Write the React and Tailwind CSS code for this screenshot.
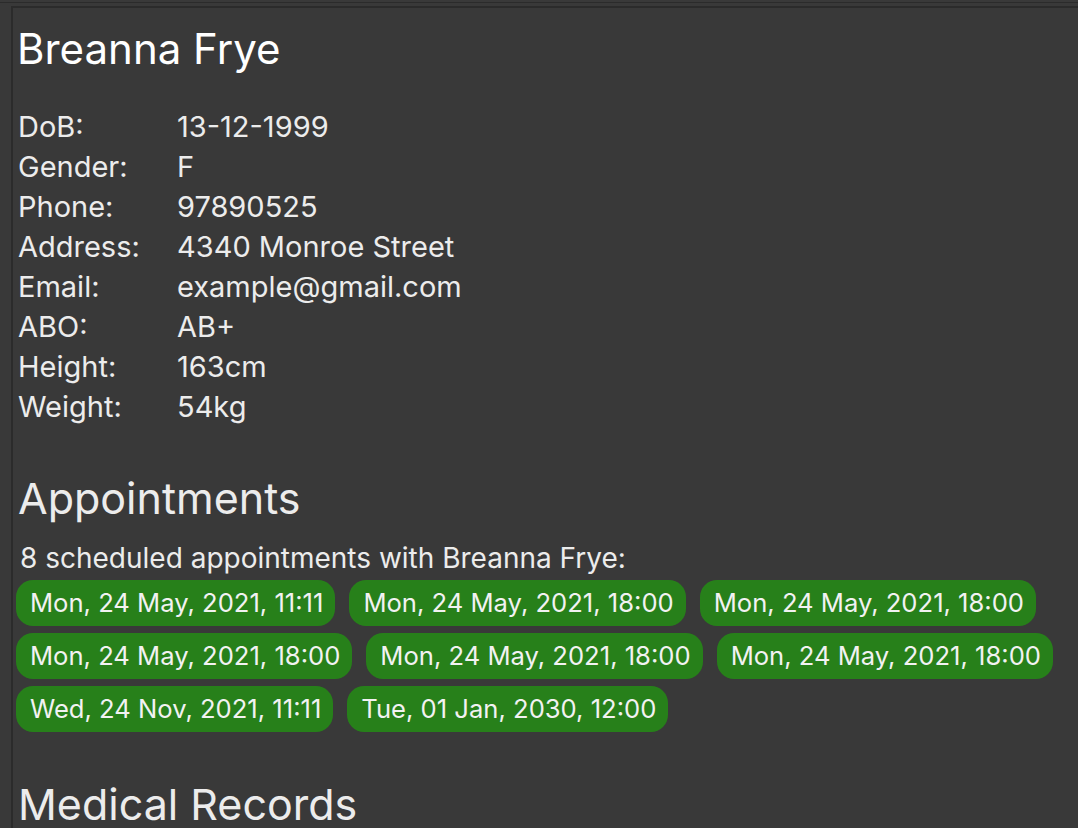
import React from "react";

const details = [
  ["DoB:", "13-12-1999"],
  ["Gender:", "F"],
  ["Phone:", "97890525"],
  ["Address:", "4340 Monroe Street"],
  ["Email:", "example@gmail.com"],
  ["ABO:", "AB+"],
  ["Height:", "163cm"],
  ["Weight:", "54kg"],
];

const appointments = [
  "Mon, 24 May, 2021, 11:11",
  "Mon, 24 May, 2021, 18:00",
  "Mon, 24 May, 2021, 18:00",
  "Mon, 24 May, 2021, 18:00",
  "Mon, 24 May, 2021, 18:00",
  "Mon, 24 May, 2021, 18:00",
  "Wed, 24 Nov, 2021, 11:11",
  "Tue, 01 Jan, 2030, 12:00",
];

const App = () => {
  return (
    <div
      className="h-[828px] overflow-hidden bg-[#393939] pt-[2px] text-[#ececec]"
      style={{ fontFamily: "Inter, 'Noto Sans', sans-serif" }}
    >
      <div className="h-[1px] bg-[#2b2b2b]" />
      <div className="ml-[11px] mt-[3px] h-[900px] border-l-2 border-t-2 border-[#2b2b2b] pl-[5px] pr-[10px]">
        <h1 className="mt-[17px] -ml-[1px] text-[42px] leading-[48px] text-white">
          Breanna Frye
        </h1>

        <div className="mt-[34px]">
          {details.map(([label, value]) => (
            <div key={label} className="flex text-[29px] leading-[40px]">
              <span className="w-[159px] shrink-0">{label}</span>
              <span>{value}</span>
            </div>
          ))}
        </div>

        <h2 className="mt-[47px] text-[43px] leading-[48px]">Appointments</h2>
        <p className="mt-[18px] pl-[2px] text-[28px] leading-[36px]">
          8 scheduled appointments with Breanna Frye:
        </p>
        <div className="-ml-[2px] mt-[4px] flex flex-wrap gap-x-[14px] gap-y-[7px]">
          {appointments.map((a, i) => (
            <span
              key={i}
              className="flex h-[46px] items-center rounded-[17px] bg-[#27801a] pl-[14px] pr-[12px] text-[25.6px] text-[#f2f2f2]"
            >
              {a}
            </span>
          ))}
        </div>

        <h2 className="mt-[48px] text-[43px] leading-[48px]">Medical Records</h2>
      </div>
    </div>
  );
};

export default App;
